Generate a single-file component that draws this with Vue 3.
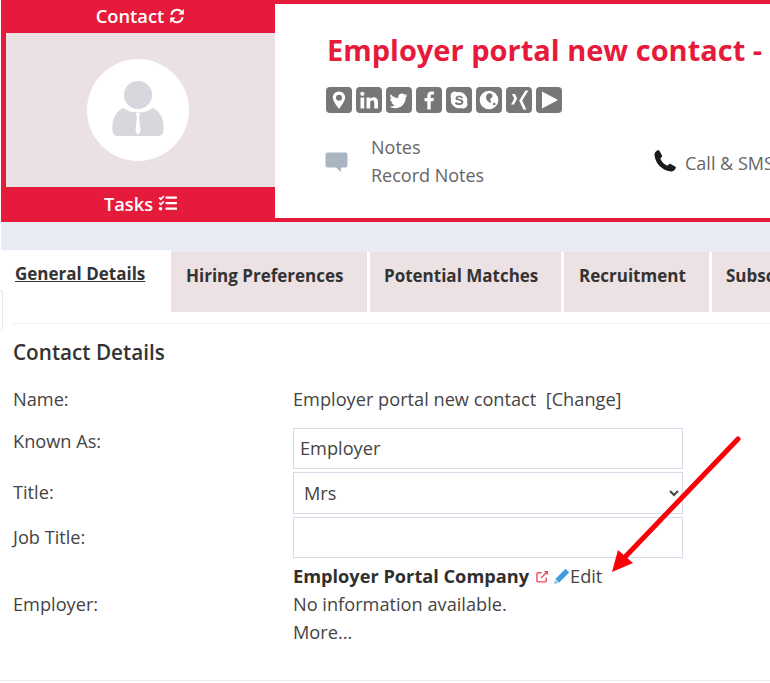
<script setup>
const tabs = [
  { label: 'Hiring Preferences', width: 196, pad: 15 },
  { label: 'Potential Matches', width: 191, pad: 14 },
  { label: 'Recruitment', width: 145, pad: 15 },
  { label: 'Subscriptions', width: 120, pad: 14 },
]
</script>

<template>
  <div class="page">
    <header class="head">
      <aside class="side">
        <div class="side-title side-top">
          Contact
          <svg class="ic-sync" viewBox="0 0 16 16" fill="none">
            <path d="M2.4 6.8A5.8 5.8 0 0 1 12.4 3.6" stroke="#fff" stroke-width="1.9" />
            <path d="M14.8 0.9V6.4H9.3Z" fill="#fff" />
            <path d="M13.6 9.2A5.8 5.8 0 0 1 3.6 12.4" stroke="#fff" stroke-width="1.9" />
            <path d="M1.2 15.1V9.6H6.7Z" fill="#fff" />
          </svg>
        </div>
        <div class="avatar-box">
          <div class="avatar">
            <svg viewBox="0 0 102 102" class="person">
              <circle cx="51" cy="36" r="14" fill="#d6d8de" />
              <path d="M36 49C45 55 57 55 66 49C72 52 76 58 76.500 66V71C76.500 75 74 77 70 77H32C28 77 25.500 75 25.500 71V66C26 58 30 52 36 49Z" fill="#d6d8de" />
              <path d="M49 54H53L52.200 58L53.500 72L51 76L48.500 72L49.800 58Z" fill="#fff" />
            </svg>
          </div>
        </div>
        <div class="side-title side-bottom">
          Tasks
          <svg class="ic-tasks" viewBox="0 0 19 16" fill="#fff">
            <path d="M0.600 3.200L1.800 2L2.900 3.100L5.300 0.500L6.500 1.600L2.900 5.500Z" />
            <path d="M0.600 8.400L1.800 7.200L2.900 8.300L5.300 5.700L6.500 6.800L2.900 10.700Z" />
            <circle cx="2.500" cy="13.800" r="1.800" />
            <rect x="7.500" y="1.400" width="11.500" height="2.300" rx=".6" />
            <rect x="7.500" y="6.900" width="11.500" height="2.300" rx=".6" />
            <rect x="7.500" y="12.500" width="11.500" height="2.300" rx=".6" />
          </svg>
        </div>
      </aside>

      <section class="card">
        <h1 class="title">Employer portal new contact - Employer Portal Company</h1>
        <div class="socials">
          <span class="social">
            <svg viewBox="0 0 26 26"><path fill-rule="evenodd" d="M13 4.500C9.300 4.500 6.800 7.300 6.800 10.600C6.800 14.500 13 22 13 22C13 22 19.200 14.500 19.200 10.600C19.200 7.300 16.700 4.500 13 4.500ZM13 7.700A3 3 0 1 1 13 13.700A3 3 0 1 1 13 7.700Z" fill="#fff" /></svg>
          </span>
          <span class="social s-in">
            <svg viewBox="0 0 26 26" fill="#fff"><rect x="4.500" y="10.500" width="3.700" height="11" /><circle cx="6.350" cy="6.800" r="2.100" /><path d="M10.500 10.500H14V12C14.800 10.900 16 10.200 17.600 10.200C20.400 10.200 22 12 22 15.200V21.500H18.300V15.800C18.300 14.200 17.700 13.300 16.400 13.300C15 13.300 14.200 14.300 14.200 15.800V21.500H10.500Z" /></svg>
          </span>
          <span class="social s-tw">
            <svg viewBox="-2.500 -2.500 31 31"><path d="M23 7.200C22.200 7.600 21.400 7.800 20.500 7.900C21.400 7.300 22.100 6.500 22.400 5.500C21.600 6 20.600 6.400 19.700 6.600C18.900 5.700 17.700 5.200 16.500 5.200C13.600 5.200 11.500 7.900 12.200 10.600C8.500 10.400 5.200 8.700 3.100 6C2 8 2.500 10.600 4.500 11.900C3.800 11.900 3.100 11.700 2.500 11.400C2.500 13.500 3.900 15.400 6 15.800C5.400 16 4.700 16 4 15.900C4.600 17.600 6.200 18.900 8.100 18.900C6.200 20.400 3.800 21 1.500 20.800C3.500 22 5.800 22.800 8.300 22.800C16.500 22.800 21.300 15.900 21 9.700C21.800 9 22.500 8.200 23 7.200Z" fill="#fff" /></svg>
          </span>
          <span class="social">
            <svg viewBox="0 0 26 26"><path d="M14.700 22.500V14.200H17.500L17.900 11H14.700V9C14.700 8 15 7.400 16.300 7.400H18V4.500C17.700 4.500 16.700 4.400 15.500 4.400C13 4.400 11.300 5.900 11.300 8.700V11H8.500V14.200H11.300V22.500Z" fill="#fff" /></svg>
          </span>
          <span class="social">
            <svg viewBox="0 0 26 26"><path d="M8.200 4.600A4.500 4.500 0 0 1 11 5.300A8.300 8.300 0 0 1 21.100 15.200A4.500 4.500 0 0 1 15 21A8.300 8.300 0 0 1 5 11A4.500 4.500 0 0 1 8.200 4.600Z" fill="#fff" /><path d="M16.700 10.300C15.900 9.100 14.400 8.700 13 8.700C11 8.700 9.500 9.800 9.500 11.300C9.500 14.400 15.400 13.300 15.400 15.100C15.400 15.900 14.400 16.300 13.200 16.300C11.400 16.300 11 15 10 15C9.400 15 9 15.400 9 15.900C9 17.200 11.100 18 13 18C15.400 18 17.400 16.900 17.400 14.900C17.400 11.700 11.500 12.800 11.500 11.100C11.500 10.400 12.300 10.200 13.100 10.200C15 10.200 15 11.400 16 11.400C16.700 11.400 17 10.900 16.700 10.300Z" fill="#777" /></svg>
          </span>
          <span class="social">
            <svg viewBox="0 0 26 26"><circle cx="13" cy="13" r="9.300" fill="#fff" /><path d="M12 6.500C15 5.800 17 7.500 16.500 9.500C16.200 11 14.500 11 14.300 12.500C14.100 14 15.800 14.500 15 15.500C14 16.500 12 14.500 10.800 13C9.800 11.500 9.800 8 12 6.500Z" fill="#777" /><circle cx="18.300" cy="17" r="1.300" fill="#777" /></svg>
          </span>
          <span class="social">
            <svg viewBox="0 0 26 26" fill="#fff"><path d="M19.500 3.500H22.400L16.300 13.500L20.400 22.500H17.300L13.200 13.500Z" /><path d="M6 7H9L11.200 11.500L8 17.500H5L8.200 11.800Z" /></svg>
          </span>
          <span class="social">
            <svg viewBox="0 0 26 26"><path d="M6 4.500L22 13L6 21.500Z" fill="#fff" /></svg>
          </span>
        </div>
        <div class="actions">
          <div class="action-notes">
            <svg class="ic-comment" viewBox="0 0 23 21"><path d="M2.500 0.500H20.500C21.700 0.500 22.500 1.300 22.500 2.500V13.500C22.500 14.700 21.700 15.500 20.500 15.500H16V20L11 15.500H2.500C1.300 15.500 0.500 14.700 0.500 13.500V2.500C0.500 1.300 1.300 0.500 2.500 0.500Z" fill="#a9b6c2" /></svg>
            <div class="notes-text">
              <div>Notes</div>
              <div>Record Notes</div>
            </div>
          </div>
          <div class="action-call">
            <svg class="ic-phone" viewBox="0 0 22 22"><path d="M5.300 0.500L8 5.500C8.300 6.100 8.200 6.600 7.700 7.100L6.300 8.500C7.500 11.800 10.300 14.600 13.500 15.800L15 14.300C15.500 13.800 16 13.700 16.600 14L21.500 16.800C22 17.200 22 17.700 21.700 18.300C20.500 20.700 18.500 21.800 16.500 21.500C8 20.200 1.800 14 0.500 5.500C0.200 3.500 1.300 1.500 3.700 0.300C4.300 0 4.900 0.100 5.300 0.500Z" fill="#1c1c1c" /></svg>
            <span class="call-text">Call &amp; SMS</span>
          </div>
        </div>
      </section>
    </header>

    <div class="band"></div>

    <main class="main">
      <span class="handle"></span>
      <nav class="tabs">
        <a class="tab tab-active">General Details</a>
        <a
          v-for="tab in tabs"
          :key="tab.label"
          class="tab"
          :style="{ width: tab.width + 'px', paddingLeft: tab.pad + 'px' }"
        >{{ tab.label }}</a>
      </nav>

      <div class="panel">
        <h2 class="section-title">Contact Details</h2>
        <div class="form">
          <div class="lbl lbl-name">Name:</div>
          <div class="val val-name">Employer portal new contact&nbsp; [Change]</div>

          <div class="lbl lbl-input">Known As:</div>
          <input class="field field-text" value="Employer" />

          <div class="lbl lbl-title">Title:</div>
          <select class="field field-select"><option>Mrs</option></select>

          <div class="lbl lbl-job">Job Title:</div>
          <input class="field field-text" value="" />

          <div class="lbl lbl-employer">Employer:</div>
          <div class="employer">
            <div class="employer-line">
              <strong>Employer Portal Company</strong>
              <svg class="ic-ext" viewBox="0 0 14 14" fill="none" stroke="#ee4a5c" stroke-width="1.500"><path d="M11 8V11.500C11 12.300 10.400 12.800 9.700 12.800H2.300C1.500 12.800 1 12.300 1 11.500V4.300C1 3.500 1.500 3 2.300 3H6" /><path d="M5.500 8.500L12 2" /><path d="M8.300 1H13V5.700Z" fill="#ee4a5c" stroke="none" /></svg>
              <svg class="ic-pen" viewBox="0 0 16 16"><path d="M11.500 0.800L15.200 4.500L5 14.700L1.300 11Z" fill="#3f9fdc" /><path d="M0.900 11.800L4.200 15.100L0 16Z" fill="#8cc6ea" /></svg>
              <span>Edit</span>
            </div>
            <div class="employer-row">No information available.</div>
            <div class="employer-row">More...</div>
          </div>
        </div>
        <div class="rule"></div>
      </div>

      <svg class="arrow" viewBox="0 0 770 683">
        <path d="M738 439L626 556" stroke="#fb0007" stroke-width="5" stroke-linecap="round" fill="none" />
        <path d="M612 572L618 550L633 563Z" fill="#fb0007" />
      </svg>
    </main>
  </div>
</template>

<style scoped>
.page {
  position: relative;
  width: 770px;
  height: 683px;
  overflow: hidden;
  background: #fff;
  font-family: "Open Sans", "Liberation Sans", sans-serif;
  color: #444;
}

.head {
  display: flex;
  height: 222px;
  margin-left: 1px;
  background: #e61a3a;
}

.side {
  display: flex;
  flex-direction: column;
  width: 274px;
  flex: none;
}

.side-title {
  display: flex;
  align-items: center;
  justify-content: center;
  gap: 5px;
  color: #fff;
  font-size: 18.300px;
  font-weight: 600;
}

.side-top {
  height: 33px;
  padding: 0 0 2px 5px;
  box-sizing: border-box;
}

.side-bottom {
  height: 34px;
  margin-top: 1px;
  padding: 0 0 4px 5px;
  box-sizing: border-box;
}

.ic-sync {
  width: 16px;
  height: 16px;
}

.ic-tasks {
  width: 19px;
  height: 16px;
}

.avatar-box {
  display: flex;
  align-items: center;
  justify-content: center;
  height: 154px;
  margin-left: 5px;
  padding-right: 5px;
  background: #ebe1e3;
}

.avatar {
  width: 102px;
  height: 102px;
  border-radius: 50%;
  background: #fff;
}

.person {
  display: block;
  width: 102px;
  height: 102px;
}

.card {
  flex: 1;
  min-width: 0;
  margin: 4px 0 4px;
  padding: 27px 0 0 52px;
  background: #fff;
  overflow: hidden;
}

.title {
  margin: 0;
  color: #e61a3a;
  font-size: 29px;
  line-height: 37px;
  font-weight: 700;
  white-space: nowrap;
}

.socials {
  display: flex;
  gap: 4px;
  margin: 19px 0 0 -1px;
}

.social {
  display: block;
  width: 26px;
  height: 26px;
  border-radius: 4px;
  background: #777;
}

.social svg {
  display: block;
  width: 26px;
  height: 26px;
}

.actions {
  display: flex;
  align-items: center;
  margin: 20px 0 0 -2px;
  color: #666;
  font-size: 18px;
  white-space: nowrap;
}

.action-notes {
  display: flex;
  align-items: center;
  width: 329px;
  flex: none;
}

.ic-comment {
  width: 23px;
  height: 21px;
  margin-top: 2px;
  flex: none;
}

.notes-text {
  margin-left: 23px;
  line-height: 28px;
}

.action-call {
  display: flex;
  align-items: center;
  gap: 9px;
}

.call-text {
  padding-top: 3px;
}

.ic-phone {
  width: 22px;
  height: 22px;
}

.band {
  height: 28px;
  margin-left: 1px;
  background: #e8ebf4;
}

.main {
  background: #fff;
  margin-left: 1px;
}

.handle {
  position: absolute;
  left: 0;
  top: 290px;
  width: 3px;
  height: 41px;
  box-sizing: border-box;
  border: 1px solid #e4e6ee;
  border-left: 0;
  border-radius: 0 3px 3px 0;
  background: #fff;
}

.tabs {
  display: flex;
  align-items: flex-end;
  height: 62px;
  gap: 3px;
  background: linear-gradient(#e8ebf4 2px, #fff 2px);
  white-space: nowrap;
}

.tab {
  display: block;
  box-sizing: border-box;
  height: 60px;
  padding: 12px 0 0 14px;
  flex: none;
  overflow: hidden;
  background: #ece1e3;
  color: #333;
  font-size: 17px;
  line-height: 24px;
  font-weight: 700;
}

.tab-active {
  width: 170px;
  height: 62px;
  margin-right: -3px;
  padding: 12px 0 0 14px;
  background: #fff;
  text-decoration: underline;
}

.panel {
  margin-top: 11px;
  padding-left: 12px;
}

.panel::before {
  content: "";
  display: block;
  height: 1px;
  background: #eef0f6;
}

.section-title {
  margin: 15px 0 0;
  color: #333;
  font-size: 20.700px;
  line-height: 26px;
  font-weight: 600;
}

.form {
  display: grid;
  grid-template-columns: 280px 390px;
  row-gap: 3px;
  margin-top: 22px;
  color: #444;
  font-size: 18.200px;
  line-height: 24px;
}

.lbl {
  color: #444;
}

.lbl-input {
  padding-top: 1px;
}

.lbl-title {
  padding-top: 8px;
}

.lbl-job {
  padding-top: 8px;
}

.lbl-name,
.val-name {
  height: 38px;
}

.field {
  display: block;
  box-sizing: border-box;
  width: 390px;
  height: 41px;
  padding: 0 6px;
  border: 1px solid #d6dbe9;
  border-radius: 0;
  background: #fff;
  color: #444;
  font: inherit;
  outline: none;
}

.field-text {
  padding-bottom: 2px;
}

.field-select {
  height: 42px;
}

.lbl-employer {
  align-self: center;
  margin-top: 1px;
}

.employer {
  margin-top: 1px;
}

.employer-line {
  display: flex;
  align-items: center;
  height: 28px;
}

.employer-line strong {
  color: #2f2f2f;
  font-weight: 700;
}

.employer-row {
  height: 28px;
  line-height: 28px;
}

.ic-ext {
  width: 13px;
  height: 13px;
  margin-left: 7px;
}

.ic-pen {
  width: 16px;
  height: 16px;
  margin-left: 5px;
}

.rule {
  height: 1px;
  margin: 34px 0 0 -13px;
  background: #eceef5;
}

.arrow {
  position: absolute;
  left: 0;
  top: 0;
  width: 770px;
  height: 683px;
  pointer-events: none;
}
</style>
